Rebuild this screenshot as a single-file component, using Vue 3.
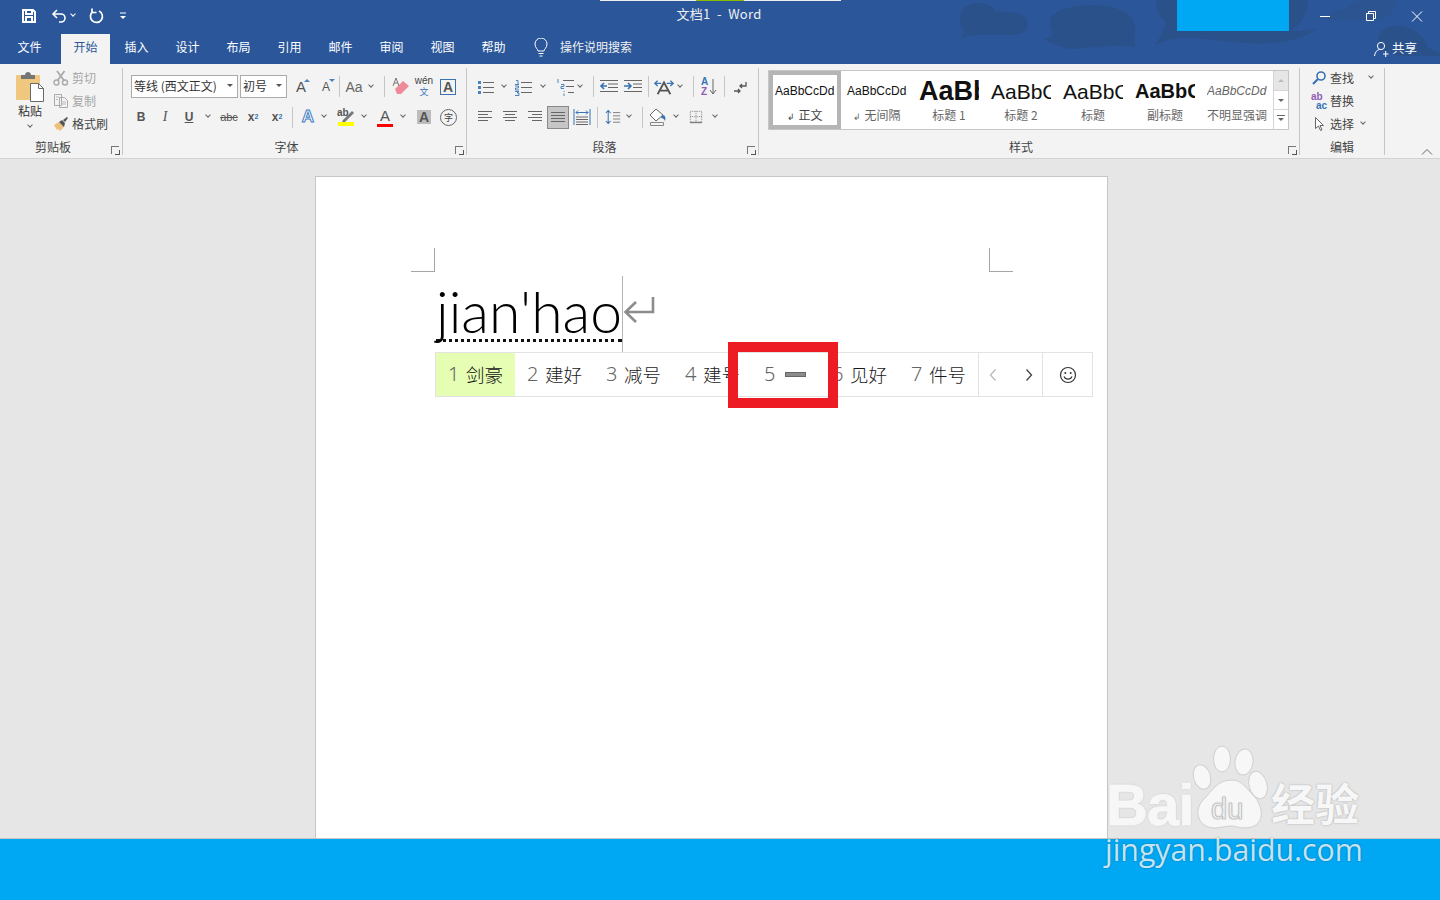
<script setup>
// candidate list of the IME popup
const candidates = [
  { n: 1, t: '剑豪', on: true },
  { n: 2, t: '建好' },
  { n: 3, t: '减号' },
  { n: 4, t: '建号' },
  { n: 5, t: '' },
  { n: 6, t: '见好' },
  { n: 7, t: '件号' },
]
const tabs = ['插入', '设计', '布局', '引用', '邮件', '审阅', '视图', '帮助']
const styles = [
  { key: 'normal', prev: 'AaBbCcDd', label: '正文', mark: true, cls: 'p-body' },
  { key: 'nospace', prev: 'AaBbCcDd', label: '无间隔', mark: true, cls: 'p-body' },
  { key: 'h1', prev: 'AaBb', label: '标题 1', cls: 'p-h1' },
  { key: 'h2', prev: 'AaBbC', label: '标题 2', cls: 'p-h2' },
  { key: 'title', prev: 'AaBbC', label: '标题', cls: 'p-h2' },
  { key: 'sub', prev: 'AaBbC', label: '副标题', cls: 'p-sub' },
  { key: 'em', prev: 'AaBbCcDd', label: '不明显强调', cls: 'p-em' },
]
</script>

<template>
  <div class="app">
    <header class="top">
      <svg class="clouds" viewBox="0 0 480 64" width="480" height="64">
        <g fill="#2b518b">
          <path d="M0 18C0 6 12 3 20 3c8 0 14 5 16 9 12-1 32 0 32 12 0 8-8 11-18 11-15 0-32-1-42 1l-7 3 3-8C1 27 0 23 0 18z" />
          <path d="M90 22c0-12 20-16 40-17 25 0 45 7 45 23 0 7-1 14 1 19-16-2-36-1-58 2-13 1-23-4-34-10 6-1 10-3 8-7-2-4-2-7-2-10z" />
          <path d="M196 0c0 10 4 18 10 22-2 8-6 16-11 23 15-7 30-9 50-6 25 3 50 6 70 4 20-3 35-7 42-15-12 3-22 3-27 3 10-6 18-16 18-31z" />
          <path d="M367 20c3-8 11-12 18-10 7-8 15-10 20-10h32c0 8-7 15-17 20z" opacity="0.6" />
          <path d="M418 40c0-10 10-15 22-14s25 9 28 22l12 5v3h-40c-15-4-22-8-22-16z" />
        </g>
      </svg>
      <div class="progress"><span></span></div>
      <div class="patch"></div>

      <div class="title-row">
        <div class="qat">
          <svg class="save" viewBox="0 0 16 16" width="16" height="16"><path d="M2 2h10l2 2v10H2z M5 2v4h6V2 M5 14v-5h6v5" fill="none" stroke="#fff" stroke-width="2" /></svg>
          <svg class="undo" viewBox="0 0 16 16" width="16" height="16"><path d="M6 2 2 6l4 4M2.500 6H10a4 4 0 0 1 0 8H8" fill="none" stroke="#fff" stroke-width="1.600" /></svg>
          <span class="ch white"></span>
          <svg class="redo" viewBox="0 0 16 16" width="16" height="16"><path d="M5 3.500A6 6 0 1 0 11 3M4 0.500v4h4.500" fill="none" stroke="#fff" stroke-width="1.700" /></svg>
          <svg class="custom" viewBox="0 0 8 8" width="8" height="8"><path d="M1 1h6" stroke="#fff" /><path d="M1 4h6L4 7z" fill="#fff" /></svg>
        </div>
        <div class="doc-title">文档1 &nbsp;-&nbsp; Word</div>
        <div class="win">
          <svg viewBox="0 0 46 30" width="46" height="30"><path d="M18 15.500h10" stroke="#fff" /></svg>
          <svg viewBox="0 0 46 30" width="46" height="30"><path d="M18.500 12.500h7v7h-7z M20.500 12.500v-2h7v7h-2" fill="none" stroke="#fff" /></svg>
          <svg viewBox="0 0 46 30" width="46" height="30"><path d="M18 10.500l10 10M28 10.500l-10 10" stroke="#fff" /></svg>
        </div>
      </div>

      <nav class="tab-row">
        <span class="tab file">文件</span>
        <span class="tab active">开始</span>
        <span class="tab" v-for="t in tabs" :key="t">{{ t }}</span>
        <svg class="bulb" viewBox="0 0 16 20" width="16" height="20"><path d="M5 13c0-2-3-3-3-7a6 6 0 0 1 12 0c0 4-3 5-3 7z M5.500 15.500h5M6.500 18h3" fill="none" stroke="#fff" /></svg>
        <span class="search">操作说明搜索</span>
        <span class="share">
          <svg viewBox="0 0 16 16" width="16" height="16"><circle cx="8" cy="5" r="3.600" fill="none" stroke="#fff" /><path d="M1.500 15c.5-4 2.500-6 5-6.500M10 13h5.500M12.700 10v6" fill="none" stroke="#fff" /></svg>
          共享
        </span>
      </nav>
    </header>

    <section class="ribbon">
      <!-- clipboard -->
      <div class="group g-clip">
        <div class="clip-body">
          <div class="paste">
            <svg viewBox="0 0 30 32" width="30" height="32">
              <rect x="1" y="4" width="24" height="25" rx="1" fill="#f0c77e" />
              <path d="M6 8V4h4c0-4 6-4 6 0h4v4z" fill="#767676" />
              <path d="M15.500 12.500h8l5 5v13h-13z" fill="#fff" stroke="#6a6a6a" />
              <path d="M23.500 12.500v5h5" fill="none" stroke="#6a6a6a" />
            </svg>
            <span class="paste-t">粘贴</span>
            <span class="ch"></span>
          </div>
          <div class="clip-list">
            <div class="li off">
              <svg viewBox="0 0 16 16" width="16" height="16"><circle cx="3.500" cy="12.500" r="2.500" fill="none" stroke="#aaa" stroke-width="1.400" /><circle cx="12" cy="12.500" r="2.500" fill="none" stroke="#aaa" stroke-width="1.400" /><path d="M4.500 10.500 11.500 1M11 10.500 4 1" stroke="#aaa" stroke-width="1.800" /></svg>
              剪切
            </div>
            <div class="li off">
              <svg viewBox="0 0 16 16" width="16" height="16"><path d="M1.500 1.500h7v11h-7zM6.500 4.500h5l3 3v7h-8z" fill="#f3f3f3" stroke="#aaa" /><path d="M8 9h5M8 11h5M3 4h3M3 6.500h2" stroke="#bbb" /></svg>
              复制
            </div>
            <div class="li">
              <svg viewBox="0 0 16 16" width="16" height="16"><path d="M1 9l5-3 5 5-4 4-2-2-1 1z" fill="#eec07c" /><path d="M6 6l3-2 3 3-1 4zM10 4l4-3 1 1-3 4" fill="#555" /></svg>
              格式刷
            </div>
          </div>
        </div>
        <div class="foot"><span>剪贴板</span><i class="launch"></i></div>
      </div>
      <div class="gsep"></div>

      <!-- font -->
      <div class="group g-font">
        <div class="rows">
          <div class="row r-a">
            <div class="combo c-font">等线 (西文正文)<i class="tri"></i></div>
            <div class="combo c-size ml2">初号<i class="tri"></i></div>
            <span class="b w20 ml4 big-a">A<i class="up"></i></span>
            <span class="b w20 ml5 small-a">A<i class="down"></i></span>
            <span class="s ml3"></span>
            <span class="b w22 ml3 aa">Aa</span><span class="ch"></span>
            <span class="s ml7"></span>
            <span class="b w20 ml5">
              <svg viewBox="0 0 20 20" width="20" height="20"><path d="M5 12l8-8 6 5-8 8h-4z" fill="#ee8a9a" /><path d="M6 1l3 8M6 1 3 9M4 6h4" fill="none" stroke="#777" /></svg>
            </span>
            <span class="b w20 ml4 wen"><em>wén</em><b>文</b></span>
            <span class="b w20 ml4 box-a">A</span>
          </div>
          <div class="row">
            <span class="b w24 fmt"><b>B</b></span>
            <span class="b w24 fmt"><i>I</i></span>
            <span class="b w24 fmt"><u>U</u></span>
            <span class="ch ml1"></span>
            <span class="b w24 ml3 abc">abc</span>
            <span class="b w24 sub">x<sub>2</sub></span>
            <span class="b w24 sub">x<sup>2</sup></span>
            <span class="s ml3"></span>
            <span class="b w20 ml5 glow">A</span><span class="ch"></span>
            <span class="b w20 ml6 hl">
              <svg viewBox="0 0 20 20" width="20" height="20"><path d="M7 13l9-9 2 2-9 9-3 0z" fill="#777" /><rect x="2" y="15" width="16" height="4" fill="#ff0" /></svg>
              <span>ab</span>
            </span>
            <span class="ch ml2"></span>
            <span class="b w20 ml5 color">A<i></i></span>
            <span class="ch ml2"></span>
            <span class="b w20 ml5 shade">A</span>
            <span class="b w20 ml4 ring">字</span>
          </div>
        </div>
        <div class="foot"><span>字体</span><i class="launch"></i></div>
      </div>
      <div class="gsep"></div>

      <!-- paragraph -->
      <div class="group g-para">
        <div class="rows">
          <div class="row r-a">
            <span class="b w18">
              <svg viewBox="0 0 18 18" width="18" height="18"><path d="M1 3h3v3H1zM1 8h3v3H1zM1 13h3v3H1z" fill="#4a82bd" /><path d="M6 4.500h11M6 9.500h11M6 14.500h11" stroke="#666" /></svg>
            </span>
            <span class="ch ml3"></span>
            <span class="b w18 ml4">
              <svg viewBox="0 0 18 18" width="18" height="18"><path d="M7 4.500h11M7 9.500h11M7 14.500h11" stroke="#666" /><path d="M2 2.500h2v4M1 6.500h4M1 8h3.500v2h-3v2H5M1 13.500h4L3 15h2v2.500H1" fill="none" stroke="#4a82bd" /></svg>
            </span>
            <span class="ch ml5"></span>
            <span class="b w18 ml7">
              <svg viewBox="0 0 18 18" width="18" height="18"><path d="M7 2.500h11M10 8.500h8M12 14.500h6" stroke="#666" /><path d="M2 1v4M5 6.500h3v2H5v2h3M8 13v1M8 15.500v3" fill="none" stroke="#4a82bd" /></svg>
            </span>
            <span class="ch"></span>
            <span class="s ml7"></span>
            <span class="b w20 ml5">
              <svg viewBox="0 0 20 18" width="20" height="18"><path d="M1 2.500h18M9 6h10M9 9.500h10M1 13.500h18" stroke="#666" /><path d="M8 8H2M5 5 2 8l3 3" fill="none" stroke="#3873b3" stroke-width="1.600" /></svg>
            </span>
            <span class="b w20 ml4">
              <svg viewBox="0 0 20 18" width="20" height="18"><path d="M1 2.500h18M10 6h9M10 9.500h9M1 13.500h18" stroke="#666" /><path d="M1 8h6M5 5l3 3-3 3" fill="none" stroke="#3873b3" stroke-width="1.600" /></svg>
            </span>
            <span class="s ml5"></span>
            <span class="b w20 ml5">
              <svg viewBox="0 0 22 18" width="22" height="18"><path d="M1 5h7M14 5h7M4 2 1 5l3 3M18 2l3 3-3 3" fill="none" stroke="#3873b3" stroke-width="1.500" /><path d="M4 17 11 4l7 13M7 13h8" fill="none" stroke="#555" stroke-width="2" /></svg>
            </span>
            <span class="ch"></span>
            <span class="s ml7"></span>
            <span class="b w20 ml5 sort">
              <span><em>A</em><b>Z</b></span>
              <svg viewBox="0 0 8 18" width="8" height="18"><path d="M4 1v15M1 12l3 4 3-4" fill="none" stroke="#666" /></svg>
            </span>
            <span class="s ml5"></span>
            <span class="b w20 ml5">
              <svg viewBox="0 0 16 16" width="16" height="16"><path d="M14 3v4H8M10 5 8 7l2 2" fill="none" stroke="#555" stroke-width="1.300" /><path d="M2 12h6M6 10l2 2-2 2" fill="none" stroke="#555" stroke-width="1.300" /></svg>
            </span>
          </div>
          <div class="row">
            <span class="b w18">
              <svg viewBox="0 0 18 16" width="18" height="16"><path d="M1 2.500h14M1 5.500h10M1 8.500h14M1 11.500h10" stroke="#666" /></svg>
            </span>
            <span class="b w18 ml6">
              <svg viewBox="0 0 18 16" width="18" height="16"><path d="M2 2.500h14M4 5.500h10M2 8.500h14M4 11.500h10" stroke="#666" /></svg>
            </span>
            <span class="b w18 ml6">
              <svg viewBox="0 0 18 16" width="18" height="16"><path d="M3 2.500h14M7 5.500h10M3 8.500h14M7 11.500h10" stroke="#666" /></svg>
            </span>
            <span class="b w22 ml4 sel">
              <svg viewBox="0 0 16 14" width="16" height="14"><path d="M1 2.500h14M1 5.500h14M1 8.500h14M1 11.500h14" stroke="#666" /></svg>
            </span>
            <span class="b w20 ml3">
              <svg viewBox="0 0 18 18" width="18" height="18"><path d="M1 1v16M17 1v16" stroke="#3873b3" /><path d="M3 4.500h12M5 2.500 3 4.500l2 2M13 2.500l2 2-2 2" fill="none" stroke="#3873b3" /><path d="M3 9h12M3 11.500h12M3 14h12M3 16.500h12" stroke="#666" /></svg>
            </span>
            <span class="s ml5"></span>
            <span class="b w20 ml5">
              <svg viewBox="0 0 20 18" width="16" height="16"><path d="M4 1v16M1 4l3-3 3 3M1 14l3 3 3-3" fill="none" stroke="#3873b3" stroke-width="1.300" /><path d="M10 3.500h9M10 7.500h9M10 11.500h9M10 15.500h9" stroke="#666" /></svg>
            </span>
            <span class="ch"></span>
            <span class="s ml7"></span>
            <span class="b w20 ml5">
              <svg viewBox="0 0 20 20" width="20" height="20"><path d="M8 2 2 8l6 6 7-6z" fill="#fff" stroke="#666" /><path d="M14 8c3 0 4 2 3 6-1-2-2-3-4-3z" fill="#3873b3" /><path d="M2.500 15.500h13v3h-13z" fill="#f3f3f3" stroke="#888" /></svg>
            </span>
            <span class="ch ml2"></span>
            <span class="b w20 ml4">
              <svg viewBox="0 0 16 16" width="14" height="14"><path d="M1.500 1.500h13v12h-13zM8 1.500v12M1.500 7.500h13" fill="none" stroke="#777" stroke-dasharray="1 1" /><path d="M1 14.500h14" stroke="#555" /></svg>
            </span>
            <span class="ch ml3"></span>
          </div>
        </div>
        <div class="foot"><span>段落</span><i class="launch"></i></div>
      </div>
      <div class="gsep"></div>

      <!-- styles -->
      <div class="group g-styles">
        <div class="gallery">
          <div class="style" :class="{ current: s.key === 'normal' }" v-for="s in styles" :key="s.key">
            <div class="prev" :class="s.cls">{{ s.prev }}</div>
            <div class="lab"><span v-if="s.mark" class="mark">↲</span>{{ s.label }}</div>
          </div>
          <div class="scroll">
            <span class="dis"><i class="t-up"></i></span>
            <span><i class="t-down"></i></span>
            <span class="more"><i class="t-down"></i></span>
          </div>
        </div>
        <div class="foot"><span>样式</span><i class="launch"></i></div>
      </div>
      <div class="gsep"></div>

      <!-- editing -->
      <div class="group g-edit">
        <div class="edit-list">
          <div class="li">
            <svg viewBox="0 0 16 16" width="16" height="16"><circle cx="10" cy="6" r="4" fill="none" stroke="#3873b3" stroke-width="1.600" /><path d="M7 9l-5 5" stroke="#3873b3" stroke-width="2.200" /></svg>
            查找<span class="ch ml8"></span>
          </div>
          <div class="li">
            <span class="rep"><em>ab</em><b>ac</b></span>
            替换
          </div>
          <div class="li">
            <svg viewBox="0 0 16 16" width="16" height="16"><path d="M4.500 1.500v11l3-2.500 2 4.500 1.500-.7-2-4.300h3.500z" fill="#fff" stroke="#666" /></svg>
            选择<span class="ch"></span>
          </div>
        </div>
        <div class="foot"><span>编辑</span></div>
      </div>
      <div class="gsep"></div>
      <svg class="collapse" viewBox="0 0 12 8" width="12" height="8"><path d="M1 6.500l5-5 5 5" fill="none" stroke="#666" /></svg>
    </section>

    <main class="work">
      <div class="page">
        <i class="crop left"></i>
        <i class="crop right"></i>
        <div class="typed"><span class="word">jian'hao</span></div>
        <i class="caret"></i>
        <svg class="ret" viewBox="0 0 32 28" width="32" height="28"><path d="M30 1v15H3M13 6 2.500 16 13 26" fill="none" stroke="#8c8c8c" stroke-width="2.600" /></svg>

        <div class="ime">
          <div class="cand" :class="{ on: c.on }" v-for="c in candidates" :key="c.n">
            <span class="num">{{ c.n }}</span>
            <span v-if="c.t">{{ c.t }}</span>
            <i v-else class="dash"></i>
          </div>
          <div class="pager">
            <svg viewBox="0 0 10 14" width="10" height="14"><path d="M7.500 1.500 2.500 7l5 5.500" fill="none" stroke="#bbb" stroke-width="1.300" /></svg>
            <svg viewBox="0 0 10 14" width="10" height="14"><path d="M2.500 1.500 7.500 7l-5 5.500" fill="none" stroke="#444" stroke-width="1.300" /></svg>
          </div>
          <div class="emoji">
            <svg viewBox="0 0 18 18" width="18" height="18"><circle cx="9" cy="9" r="7.500" fill="none" stroke="#333" stroke-width="1.200" /><circle cx="6.300" cy="7" r="1" fill="#333" /><circle cx="11.700" cy="7" r="1" fill="#333" /><path d="M5 10.500c1.500 3.500 6.500 3.500 8 0" fill="none" stroke="#333" stroke-width="1.200" /></svg>
          </div>
        </div>
        <div class="red"></div>
      </div>
    </main>

    <footer class="strip"></footer>

    <div class="mark-wm">
      <svg class="paw" viewBox="0 0 90 90" width="90" height="90">
        <g fill="#f7f7f7" stroke="#cfcfcf">
          <ellipse cx="16" cy="33" rx="8.500" ry="12.500" transform="rotate(-15 16 33)" />
          <ellipse cx="36" cy="15" rx="8.500" ry="13" />
          <ellipse cx="58" cy="18" rx="9" ry="13" transform="rotate(8 58 18)" />
          <ellipse cx="72" cy="41" rx="9" ry="14" transform="rotate(-15 72 41)" />
          <path d="M46 36c10 0 14 8 21 15 11 11 14 33-9 33-6 0-8-2-13-2-6 0-10 2-16 2-17 0-22-17-12-28 9-8 13-20 29-20z" />
        </g>
      </svg>
      <span class="wm-bai">Bai</span>
      <span class="wm-du">du</span>
      <span class="wm-jy">经验</span>
      <span class="wm-url">jingyan.baidu.com</span>
    </div>
  </div>
</template>

<style>
html,
body {
  margin: 0;
  overflow: hidden;
}
</style>

<style scoped>
.app {
  position: relative;
  width: 1440px;
  height: 900px;
  display: flex;
  flex-direction: column;
  overflow: hidden;
  font-family: "Noto Sans CJK SC", "Liberation Sans", sans-serif;
  font-size: 12px;
  color: #444;
}

/* title bar + tabs */
.top {
  position: relative;
  height: 64px;
  flex: none;
  background: #2b579a;
  color: #fff;
}
.clouds {
  position: absolute;
  right: 0;
  top: 0;
}
.progress {
  position: absolute;
  left: 600px;
  top: 0;
  width: 241px;
  height: 1px;
  background: #eee;
}
.progress span {
  display: block;
  margin-left: 96px;
  width: 48px;
  height: 1px;
  background: #8cb800;
}
.patch {
  position: absolute;
  left: 1177px;
  top: 0;
  width: 112px;
  height: 31px;
  background: #00a7f2;
}
.title-row {
  position: relative;
  height: 32px;
  display: flex;
  align-items: center;
}
.qat {
  display: flex;
  align-items: center;
  padding-left: 21px;
  width: 300px;
  box-sizing: border-box;
}
.undo {
  margin-left: 14px;
}
.redo {
  margin-left: 9px;
}
.custom {
  margin-left: 15px;
}
.doc-title {
  position: absolute;
  left: 619px;
  width: 200px;
  padding-bottom: 5px;
  text-align: center;
  font-size: 13px;
  letter-spacing: 0.3px;
  color: #f0f0f0;
}
.win {
  margin-left: auto;
  display: flex;
}
.tab-row {
  position: relative;
  height: 32px;
  display: flex;
  padding-left: 5px;
  gap: 2px;
}
.tab {
  width: 49px;
  height: 32px;
  line-height: 30px;
  text-align: center;
  color: #fff;
  flex: none;
}
.tab.file {
  margin-right: 5px;
}
.tab.active {
  margin-top: 2px;
  height: 30px;
  line-height: 26px;
  background: #f3f3f3;
  color: #2b579a;
}
.bulb {
  margin: 6px 0 0 13px;
}
.search {
  margin-left: 9px;
  line-height: 30px;
  color: #f0f0f0;
}
.share {
  margin-left: auto;
  margin-right: 23px;
  display: flex;
  align-items: center;
  gap: 3px;
  height: 30px;
  font-size: 12.500px;
}
.share svg {
  margin-top: 4px;
}

/* ribbon */
.ribbon {
  height: 94px;
  flex: none;
  display: flex;
  background: #f3f3f3;
  border-bottom: 1px solid #d2d2d2;
  position: relative;
}
.group {
  position: relative;
  display: flex;
  flex-direction: column;
  flex: none;
}
.gsep {
  width: 1px;
  flex: none;
  margin: 4px 0 3px;
  background: #c6c6c6;
}
.g-clip { width: 122px; }
.g-font { width: 343px; }
.g-para { width: 291px; }
.g-styles { width: 540px; }
.g-edit { width: 84px; }

.foot {
  margin-top: auto;
  height: 22px;
  line-height: 22px;
  padding-right: 16px;
  text-align: center;
  position: relative;
  color: #444;
}
.g-edit .foot {
  padding-right: 0;
}
.launch {
  position: absolute;
  right: 3px;
  bottom: 4px;
  width: 7px;
  height: 7px;
  border: 1px solid #777;
  border-width: 1px 0 0 1px;
}
.launch::after {
  content: "";
  position: absolute;
  right: -1px;
  bottom: -1px;
  width: 4px;
  height: 4px;
  border: solid #555;
  border-width: 0 1px 1px 0;
}

.clip-body {
  display: flex;
  padding: 7px 0 0 15px;
}
.paste {
  width: 30px;
  display: flex;
  flex-direction: column;
  align-items: center;
}
.paste .ch {
  margin-top: 1px;
}
.paste-t {
  margin-top: -1px;
  line-height: 18px;
  color: #333;
}
.clip-list {
  margin-left: 8px;
  margin-top: -5px;
}
.li {
  height: 23px;
  display: flex;
  align-items: center;
  gap: 3px;
  white-space: nowrap;
  color: #444;
}
.li.off {
  color: #a6a6a6;
}

.rows {
  padding-top: 11px;
}
.row {
  display: flex;
  align-items: center;
  height: 22px;
  margin-bottom: 8px;
}
.r-a {
  height: 23px;
}
.g-font .r-a {
  padding-left: 8px;
}
.g-font .row:not(.r-a) {
  padding-left: 6px;
}
.g-para .row {
  padding-left: 10px;
}
.combo {
  position: relative;
  height: 23px;
  box-sizing: border-box;
  border: 1px solid #ababab;
  background: #fff;
  line-height: 20px;
  padding-left: 2px;
  color: #333;
  flex: none;
  white-space: nowrap;
}
.c-font { width: 107px; }
.c-size { width: 47px; }
.tri {
  position: absolute;
  right: 4px;
  top: 8px;
  border: 3px solid transparent;
  border-top: 3px solid #555;
}
.b {
  position: relative;
  height: 22px;
  display: flex;
  align-items: center;
  justify-content: center;
  flex: none;
  color: #555;
}
.w18 { width: 18px; }
.w20 { width: 20px; }
.w22 { width: 22px; }
.w24 { width: 24px; }
.ml1 { margin-left: 1px; }
.ml2 { margin-left: 2px; }
.ml3 { margin-left: 3px; }
.ml4 { margin-left: 4px; }
.ml5 { margin-left: 5px; }
.ml6 { margin-left: 6px; }
.ml7 { margin-left: 7px; }
.ml8 { margin-left: 8px; }
.s {
  width: 1px;
  height: 21px;
  background: #c6c6c6;
  flex: none;
}
.ch {
  width: 12px;
  height: 12px;
  flex: none;
  display: inline-block;
  position: relative;
}
.ch::before {
  content: "";
  position: absolute;
  left: 4px;
  top: 2px;
  width: 3px;
  height: 3px;
  border: solid #666;
  border-width: 0 1px 1px 0;
  transform: rotate(45deg);
}
.ch.white::before {
  border-color: #fff;
}

/* font group glyphs */
.big-a,
.small-a,
.aa,
.box-a,
.glow,
.color,
.shade {
  font-family: "Liberation Sans", sans-serif;
}
.big-a { font-size: 15px; }
.small-a { font-size: 12px; }
.up,
.down {
  position: absolute;
  right: 1px;
  top: 3px;
  border: 3px solid transparent;
}
.up {
  top: 0;
  border-bottom: 3px solid #4a82bd;
}
.down {
  border-top: 3px solid #4a82bd;
}
.aa {
  font-size: 14px;
  color: #666;
}
.wen {
  flex-direction: column;
  gap: 2px;
}
.wen em {
  font-style: normal;
  font-size: 10px;
  line-height: 8px;
  font-family: "Liberation Sans", sans-serif;
  color: #444;
}
.wen b {
  font-weight: 400;
  font-size: 9px;
  line-height: 9px;
  color: #3873b3;
}
.box-a {
  width: 16px;
  height: 16px;
  margin-left: 6px;
  margin-right: 2px;
  border: 1px solid #3873b3;
  font-size: 14px;
  font-weight: 700;
  color: #555;
  box-sizing: border-box;
  line-height: 14px;
}
.fmt {
  font-family: "Liberation Serif", serif;
  font-size: 12px;
  color: #555;
}
.fmt b,
.fmt u {
  font-family: "Liberation Sans", sans-serif;
  font-weight: 700;
}
.fmt i {
  font-weight: 400;
  font-size: 14px;
}
.abc {
  font-family: "Liberation Sans", sans-serif;
  font-size: 11px;
  text-decoration: line-through;
}
.sub {
  font-family: "Liberation Sans", sans-serif;
  font-size: 12px;
  font-weight: 700;
}
.sub sub,
.sub sup {
  font-size: 7px;
  color: #3873b3;
  line-height: 0;
}
.glow {
  font-size: 17px;
  font-weight: 700;
  color: #fff;
  -webkit-text-stroke: 1px #3f7cbf;
}
.hl span {
  position: absolute;
  left: 1px;
  top: 1px;
  font-family: "Liberation Sans", sans-serif;
  font-size: 10px;
  font-weight: 700;
  color: #555;
}
.color {
  font-size: 15px;
  padding-bottom: 3px;
  box-sizing: border-box;
}
.color i {
  position: absolute;
  left: 2px;
  right: 2px;
  bottom: 1px;
  height: 3px;
  background: #f00;
}
.shade {
  background: #bcbcbc;
  width: 14px;
  margin-left: 8px;
  margin-right: 3px;
  height: 14px;
  font-size: 14px;
  font-weight: 700;
  color: #555;
}
.ring {
  width: 15px;
  height: 15px;
  border: 1px solid #666;
  border-radius: 50%;
  font-size: 9px;
  margin-left: 6px;
  color: #444;
}

.sel {
  height: 23px;
  box-sizing: border-box;
  background: #c6c6c6;
  border: 1px solid #8a8a8a;
}
.sort {
  gap: 1px;
}
.sort > span {
  display: flex;
  flex-direction: column;
  font-family: "Liberation Sans", sans-serif;
  font-size: 10px;
  line-height: 10px;
  font-weight: 700;
}
.sort em {
  font-style: normal;
  color: #3873b3;
}
.sort b {
  color: #8e5db5;
}

/* styles gallery */
.gallery {
  margin: 6px 0 0 9px;
  width: 521px;
  height: 60px;
  box-sizing: border-box;
  border: 1px solid #c6c6c6;
  background: #fff;
  display: flex;
}
.style {
  width: 72px;
  height: 58px;
  box-sizing: border-box;
  padding: 4px 6px 0;
  flex: none;
  text-align: center;
  overflow: hidden;
}
.style.current {
  border: 4px solid #b5b5b5;
  padding: 0 2px;
}
.prev {
  height: 33px;
  line-height: 33px;
  overflow: hidden;
  white-space: nowrap;
  font-family: "Liberation Sans", sans-serif;
  color: #111;
  text-align: left;
}
.p-body { font-size: 12px; }
.p-h1 { font-size: 27px; font-weight: 700; }
.p-h2 { font-size: 21px; }
.p-sub { font-size: 20px; font-weight: 700; }
.p-em { font-size: 12px; font-style: italic; color: #666; }
.lab {
  height: 18px;
  line-height: 14px;
  color: #666;
  white-space: nowrap;
}
.mark {
  font-size: 9px;
  margin-right: 3px;
}
.current .lab {
  color: #444;
}
.scroll {
  margin-left: auto;
  width: 15px;
  display: flex;
  flex-direction: column;
  border-left: 1px solid #d5d5d5;
}
.scroll span {
  position: relative;
  flex: 1;
  display: flex;
  align-items: center;
  justify-content: center;
  border-bottom: 1px solid #d5d5d5;
}
.scroll span:last-child {
  border-bottom: 0;
}
.scroll .dis {
  background: #e6e6e6;
}
.t-up {
  border: 3px solid transparent;
  border-bottom: 3px solid #bbb;
  margin-top: -3px;
}
.t-down {
  border: 3px solid transparent;
  border-top: 3px solid #666;
  margin-top: 3px;
}
.more::before {
  content: "";
  position: absolute;
  left: 3px;
  right: 3px;
  top: 5px;
  height: 1px;
  background: #666;
}

.edit-list {
  padding: 2px 0 0 11px;
}
.rep {
  width: 16px;
  display: flex;
  flex-direction: column;
  font-family: "Liberation Sans", sans-serif;
  font-size: 10px;
  line-height: 9px;
  font-weight: 700;
}
.rep em {
  font-style: normal;
  color: #8e5db5;
}
.rep b {
  color: #3873b3;
  text-align: right;
}
.collapse {
  position: absolute;
  right: 7px;
  bottom: 2px;
}

/* document */
.work {
  flex: 1;
  min-height: 0;
  background: #e6e6e6;
  padding: 17px 0 0 315px;
}
.page {
  position: relative;
  width: 793px;
  height: 100%;
  box-sizing: border-box;
  background: #fff;
  border: 1px solid #c6c6c6;
  border-bottom: 0;
}
.crop {
  position: absolute;
  top: 71px;
  width: 23px;
  height: 23px;
  border: solid #a6a6a6;
}
.crop.left {
  left: 95px;
  border-width: 0 1px 1px 0;
}
.crop.right {
  left: 673px;
  border-width: 0 0 1px 1px;
}
.typed {
  padding: 107px 0 0 120px;
  font-family: Lato, "Liberation Sans", sans-serif;
  font-weight: 300;
  font-size: 57px;
  color: #000;
}
.word {
  display: block;
  width: fit-content;
  line-height: 55px;
  border-bottom: 3px dotted #111;
}
.caret {
  position: absolute;
  left: 306px;
  top: 99px;
  width: 1px;
  height: 76px;
  background: #b5b5b5;
}
.ret {
  position: absolute;
  left: 307px;
  top: 119px;
}
.ime {
  position: absolute;
  left: 119px;
  top: 175px;
  width: 658px;
  height: 45px;
  box-sizing: border-box;
  border: 1px solid #e3e3e3;
  background: #fff;
  display: flex;
  font-size: 18.500px;
  font-weight: 300;
  color: #1a1a1a;
}
.cand {
  display: flex;
  align-items: center;
  padding: 0 12px 2px;
  gap: 8px;
  flex: none;
  white-space: nowrap;
}
.cand.on {
  background: #e6fdb4;
  color: #111;
}
.num {
  font-family: "Noto Sans", "Liberation Sans", sans-serif;
  font-size: 20px;
  color: #666;
  width: 10px;
}
.dash {
  width: 21px;
  height: 5px;
  background: #8c8c8c;
  border: 1px solid #666;
  box-sizing: border-box;
  margin: 2px 2px 0 3px;
}
.pager {
  margin-left: auto;
  width: 65px;
  flex: none;
  box-sizing: border-box;
  border-left: 1px solid #e3e3e3;
  border-right: 1px solid #e3e3e3;
  display: flex;
  align-items: center;
  justify-content: space-between;
  padding: 0 8px 0 9px;
}
.emoji {
  width: 49px;
  flex: none;
  display: flex;
  align-items: center;
  justify-content: center;
}
.red {
  position: absolute;
  left: 412px;
  top: 165px;
  width: 110px;
  height: 66px;
  box-sizing: border-box;
  border: 10px solid #ed1c24;
}
.strip {
  height: 61px;
  flex: none;
  background: #00a7f2;
  border-top: 1px solid #c6c6c6;
}

/* watermark */
.mark-wm {
  position: absolute;
  left: 0;
  top: 0;
  width: 1440px;
  height: 900px;
  pointer-events: none;
}
.mark-wm span {
  position: absolute;
  white-space: nowrap;
  text-shadow: 0 0 2px rgba(0, 0, 0, 0.3);
}
.paw {
  position: absolute;
  left: 1186px;
  top: 744px;
}
.wm-bai {
  left: 1106px;
  top: 770px;
  font: 700 58px/70px "Liberation Sans", sans-serif;
  letter-spacing: -1px;
  color: #f7f7f7;
  -webkit-text-stroke: 1px #f7f7f7;
}
.wm-du {
  left: 1211px;
  top: 793px;
  font: 400 29px/32px "Liberation Sans", sans-serif;
  color: #f0f0f0;
  -webkit-text-stroke: 0.5px #aaa;
}
.wm-jy {
  left: 1271px;
  top: 772px;
  font: 700 44px/60px "Noto Sans CJK SC", sans-serif;
  color: #f7f7f7;
}
.wm-url {
  left: 1105px;
  top: 830px;
  font: 400 30.300px/40px "Open Sans", "Liberation Sans", sans-serif;
  color: rgba(255, 255, 255, 0.78);
}
</style>
